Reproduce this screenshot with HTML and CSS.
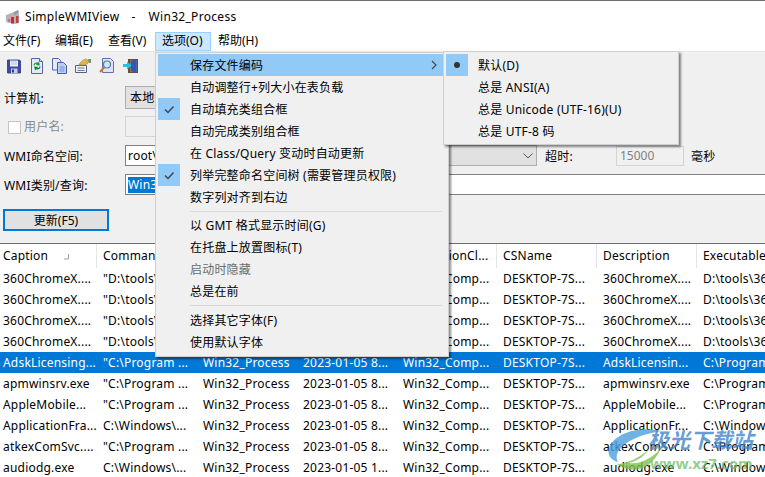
FILE: index.html
```html
<!DOCTYPE html>
<html lang="zh-CN">
<head>
<meta charset="utf-8">
<title>SimpleWMIView - Win32_Process</title>
<link rel="stylesheet" href="styles.css">
</head>
<body>
<div class="app">
  <header class="titlebar">
    <svg class="app-icon" width="15" height="16" viewBox="0 0 15 16"><path d="M1 6l8-3 5 2v9l-4 1-9-2z" fill="#b4b4bc"/><path d="M2 7l7-3v10l-7-1z" fill="#d4a8ac"/><path d="M9 3l4-2 1 3-5 2z" fill="#8f98a8"/><path d="M6 8h3v6.500H6z" fill="#c62c30"/><path d="M11 7h2.500v7H11z" fill="#c83a3c"/><path d="M3 10h2v3H3z" fill="#8c8c94"/></svg>
    <span class="title-app">SimpleWMIView</span><span class="title-dash">-</span><span class="title-doc">Win32_Process</span>
  </header>
  <nav class="menubar">
    <span class="menu-top first">文件(F)</span>
    <span class="menu-top">编辑(E)</span>
    <span class="menu-top">查看(V)</span>
    <span class="menu-top active">选项(O)</span>
    <span class="menu-top">帮助(H)</span>
  </nav>
  <div class="toolbar">
    <svg class="tool" width="16" height="16" viewBox="0 0 16 16"><path d="M1.500 2h12l1 1v12h-13z" fill="#3a4aa6" stroke="#2a3280" stroke-width=".8"/><path d="M4 2.500h8v6H4z" fill="#eceef6"/><path d="M5 4h6M5 6h6" stroke="#b0b4d0" stroke-width=".8"/><path d="M5 10.500h6.500V15H5z" fill="#c8cce0"/><path d="M6 11.500h2V14.500H6z" fill="#34407c"/></svg>
    <svg class="tool" width="16" height="16" viewBox="0 0 16 16"><path d="M2.500.5h8l3 3v12h-11z" fill="#e6eaf8" stroke="#5464b0"/><path d="M10.500.5v3h3" fill="#c8d0ec" stroke="#5464b0"/><path d="M4.500 7.500c0-2.500 2.500-3.500 4.500-2.700l1-1.300.8 4-4-.4 1-1.200c-1.200-.4-2 .3-2.100 1.600z" fill="#149a34"/><path d="M11.500 8.500c0 2.500-2.500 3.500-4.500 2.700l-1 1.300-.8-4 4 .4-1 1.200c1.200.4 2-.3 2.100-1.600z" fill="#0c8028"/></svg>
    <svg class="tool" width="16" height="16" viewBox="0 0 16 16"><path d="M.5.500h6l2.500 2.500v9H.5z" fill="#e6eaf8" stroke="#5868b0"/><path d="M5.500 4.500h6l3 3v8h-9z" fill="#bcd0f4" stroke="#4c5cac"/><path d="M7.500 9h5M7.500 11h5M7.500 13h5" stroke="#6c84cc" stroke-width=".8"/></svg>
    <svg class="tool" width="17" height="16" viewBox="0 0 17 16"><path d="M.5 7.500h11v7H.5z" fill="#f0f2f8" stroke="#56607c"/><path d="M2.500 10h7M2.500 12.500h7" stroke="#707890"/><path d="M4 7c1-3 4-5 7-6l3 2c-1 3-3 4-6 4z" fill="#dcb454" stroke="#a08030" stroke-width=".6"/><path d="M13 1h3v4h-2z" fill="#6a9a70"/></svg>
    <svg class="tool" width="16" height="16" viewBox="0 0 16 16"><path d="M3.500.5h8l3 3v11h-11z" fill="#dce4f6" stroke="#6070b4"/><circle cx="8" cy="6.500" r="3.500" fill="#cfe6f8" stroke="#5878b4" stroke-width="1.200"/><path d="M5.500 9L1 14" stroke="#c87830" stroke-width="2"/></svg>
    <svg class="tool" width="17" height="16" viewBox="0 0 17 16"><path d="M6 1h10v14H6z" fill="#6e4c36"/><path d="M8 2h7v12H8z" fill="#8f7058"/><path d="M9 3l5.500-2v14L9 13z" fill="#2c58c0"/><path d="M1 6h4V3.500L9.500 7.500 5 11.500V9H1z" fill="#18c8e8"/></svg>
  </div>
  <section class="form">
    <div class="form-row row-computer">
      <label class="form-label">计算机:</label>
      <div class="combo wide">本地计算机</div>
    </div>
    <div class="form-row row-user">
      <span class="check-label"><span class="checkbox"></span>用户名:</span>
      <div class="input disabled short"></div>
    </div>
    <div class="form-row row-ns">
      <label class="form-label">WMI命名空间:</label>
      <div class="input ns">root\CIMV2</div>
      <div class="combo lang"><svg class="chev" width="10" height="6" viewBox="0 0 10 6"><path d="M.5.500L5 5 9.500.5" fill="none" stroke="#555"/></svg></div>
      <label class="timeout-label">超时:</label>
      <div class="input timeout">15000</div>
      <span class="unit">毫秒</span>
    </div>
    <div class="form-row row-query">
      <label class="form-label">WMI类别/查询:</label>
      <div class="input query"><span class="selected-text">Win32_Process</span></div>
    </div>
    <button class="update">更新(F5)</button>
  </section>
  <section class="list">
    <div class="row head">
      <div class="cell">Caption<svg class="sort" width="7" height="7" viewBox="0 0 7 7"><path d="M5.500 1v5H1" fill="none" stroke="#a0a0a0"/></svg></div>
      <div class="cell">CommandLine</div><div class="cell">CreationCla...</div><div class="cell">CreationDate</div><div class="cell">CSCreationCl...</div><div class="cell">CSName</div><div class="cell">Description</div><div class="cell">ExecutablePath</div>
    </div>
    <div class="row"><div class="cell">360ChromeX....</div><div class="cell">"D:\tools\36...</div><div class="cell">Win32_Process</div><div class="cell">2023-01-05 8...</div><div class="cell">Win32_Comp...</div><div class="cell">DESKTOP-7S...</div><div class="cell">360ChromeX....</div><div class="cell">D:\tools\360Chrome</div></div>
    <div class="row"><div class="cell">360ChromeX....</div><div class="cell">"D:\tools\36...</div><div class="cell">Win32_Process</div><div class="cell">2023-01-05 8...</div><div class="cell">Win32_Comp...</div><div class="cell">DESKTOP-7S...</div><div class="cell">360ChromeX....</div><div class="cell">D:\tools\360Chrome</div></div>
    <div class="row"><div class="cell">360ChromeX....</div><div class="cell">"D:\tools\36...</div><div class="cell">Win32_Process</div><div class="cell">2023-01-05 8...</div><div class="cell">Win32_Comp...</div><div class="cell">DESKTOP-7S...</div><div class="cell">360ChromeX....</div><div class="cell">D:\tools\360Chrome</div></div>
    <div class="row"><div class="cell">360ChromeX....</div><div class="cell">"D:\tools\36...</div><div class="cell">Win32_Process</div><div class="cell">2023-01-05 8...</div><div class="cell">Win32_Comp...</div><div class="cell">DESKTOP-7S...</div><div class="cell">360ChromeX....</div><div class="cell">D:\tools\360Chrome</div></div>
    <div class="row selected"><div class="cell">AdskLicensing...</div><div class="cell">"C:\Program ...</div><div class="cell">Win32_Process</div><div class="cell">2023-01-05 8...</div><div class="cell">Win32_Comp...</div><div class="cell">DESKTOP-7S...</div><div class="cell">AdskLicensin...</div><div class="cell">C:\Program Files</div></div>
    <div class="row"><div class="cell">apmwinsrv.exe</div><div class="cell">"C:\Program ...</div><div class="cell">Win32_Process</div><div class="cell">2023-01-05 8...</div><div class="cell">Win32_Comp...</div><div class="cell">DESKTOP-7S...</div><div class="cell">apmwinsrv.exe</div><div class="cell">C:\Program Files</div></div>
    <div class="row"><div class="cell">AppleMobile...</div><div class="cell">"C:\Program ...</div><div class="cell">Win32_Process</div><div class="cell">2023-01-05 8...</div><div class="cell">Win32_Comp...</div><div class="cell">DESKTOP-7S...</div><div class="cell">AppleMobile...</div><div class="cell">C:\Program Files</div></div>
    <div class="row"><div class="cell">ApplicationFra...</div><div class="cell">C:\Windows\...</div><div class="cell">Win32_Process</div><div class="cell">2023-01-05 8...</div><div class="cell">Win32_Comp...</div><div class="cell">DESKTOP-7S...</div><div class="cell">ApplicationFr...</div><div class="cell">C:\Windows\System</div></div>
    <div class="row"><div class="cell">atkexComSvc....</div><div class="cell">"C:\Program ...</div><div class="cell">Win32_Process</div><div class="cell">2023-01-05 8...</div><div class="cell">Win32_Comp...</div><div class="cell">DESKTOP-7S...</div><div class="cell">atkexComSvc...</div><div class="cell">C:\Program Files</div></div>
    <div class="row"><div class="cell">audiodg.exe</div><div class="cell">C:\Windows\...</div><div class="cell">Win32_Process</div><div class="cell">2023-01-05 1...</div><div class="cell">Win32_Comp...</div><div class="cell">DESKTOP-7S...</div><div class="cell">audiodg.exe</div><div class="cell">C:\Windows\System</div></div>
  </section>
</div>

<div class="popup main-menu">
  <div class="item open">保存文件编码<svg class="arrow" width="6" height="10" viewBox="0 0 6 10"><path d="M1 1l4 4-4 4" fill="none" stroke="#444" stroke-width="1.100"/></svg></div>
  <div class="item">自动调整行+列大小在表负载</div>
  <div class="item checked"><svg class="mark" width="22" height="22" viewBox="0 0 22 22"><path d="M7 11.500l3 3 5.500-6" fill="none" stroke="#3c4a58" stroke-width="1.500"/></svg>自动填充类组合框</div>
  <div class="item">自动完成类别组合框</div>
  <div class="item">在 Class/Query 变动时自动更新</div>
  <div class="item checked"><svg class="mark" width="22" height="22" viewBox="0 0 22 22"><path d="M7 11.500l3 3 5.500-6" fill="none" stroke="#3c4a58" stroke-width="1.500"/></svg>列举完整命名空间树 (需要管理员权限)</div>
  <div class="item">数字列对齐到右边</div>
  <div class="sep"></div>
  <div class="item">以 GMT 格式显示时间(G)</div>
  <div class="item">在托盘上放置图标(T)</div>
  <div class="item muted">启动时隐藏</div>
  <div class="item">总是在前</div>
  <div class="sep"></div>
  <div class="item">选择其它字体(F)</div>
  <div class="item">使用默认字体</div>
</div>

<div class="popup sub-menu">
  <div class="item checked"><svg class="mark" width="22" height="22" viewBox="0 0 22 22"><circle cx="11" cy="11" r="3" fill="#333"/></svg>默认(D)</div>
  <div class="item">总是 ANSI(A)</div>
  <div class="item">总是 Unicode (UTF-16)(U)</div>
  <div class="item">总是 UTF-8 码</div>
</div>

<div class="watermark">
  <svg class="wm-logo" width="58" height="46" viewBox="0 0 58 46"><path d="M54 3C34-2 8 4 2 20c-2 7 2 12 9 14C6 26 14 10 54 3z" fill="#4aa0dc" opacity=".8"/><path d="M10 36c14 10 34 8 44-16-8 10-22 17-32 15 8-2 16-7 20-14-8 8-22 15-32 15z" fill="#7cc04c" opacity=".8"/></svg>
  <div class="wm-name">极光下载站</div>
  <div class="wm-url">www.xz7.com</div>
</div>
</body>
</html>
```
FILE: styles.css
```css
* { box-sizing: border-box; }
html, body { margin: 0; padding: 0; }
body {
  width: 765px;
  height: 477px;
  overflow: hidden;
  position: relative;
  background: #f0f0f0;
  color: #000;
  font: 12px/16px "Noto Sans", "Noto Sans CJK SC", sans-serif;
  letter-spacing: .2px;
}
.app { display: flex; flex-direction: column; height: 477px; }

.titlebar {
  height: 32px;
  flex: none;
  display: flex;
  align-items: center;
  background: #fff;
  border-top: 1px solid #6e6e6e;
  padding: 1px 0 0 5px;
  letter-spacing: .3px;
}
.app-icon { margin-right: 5px; }
.title-dash { margin-left: 12px; }
.title-doc { margin-left: 13px; }

.menubar {
  height: 19px;
  flex: none;
  display: grid;
  grid-template-columns: 48px 53px 54px 56px 54px;
  background: #fff;
  letter-spacing: 0;
}
.menu-top { padding: 1px 0 0 7px; line-height: 16px; }
.menu-top.first { padding-left: 3px; }
.menu-top.active { background: #cce8ff; border: 1px solid #99d1ff; padding: 0 0 0 6px; }

.toolbar {
  height: 28px;
  flex: none;
  display: flex;
  align-items: center;
  gap: 7px;
  padding: 0 0 0 6px;
  border-top: 1px solid #e6e6e6;
}

.form { height: 164px; flex: none; padding-top: 7px; }
.form-row { display: flex; align-items: center; }
.row-computer { height: 23px; }
.row-user { height: 21px; margin-top: 7px; }
.row-ns { height: 21px; margin-top: 8px; }
.row-query { height: 21px; margin-top: 8px; }
.form-label { width: 125px; padding: 2px 0 0 4px; flex: none; }
.row-query .form-label { padding-top: 3px; }
.check-label { width: 125px; flex: none; padding: 1px 0 0 8px; display: flex; align-items: center; color: #8a8a8a; }
.checkbox { width: 13px; height: 13px; border: 1px solid #c4c4c4; background: #fff; margin-right: 3px; }
.combo { background: #e1e1e1; border: 1px solid #adadad; height: 100%; padding-left: 4px; display: flex; align-items: center; }
.combo.wide { width: 315px; }
.input { background: #fff; border: 1px solid #a0a0a0; height: 100%; padding-left: 2px; display: flex; align-items: center; overflow: hidden; white-space: nowrap; }
.input.disabled { background: #f0f0f0; border-color: #d4d4d4; }
.input.short { width: 315px; }
.input.ns { width: 170px; border-color: #808080; }
.combo.lang { width: 242px; justify-content: flex-end; padding-right: 3px; }
.timeout-label { margin-left: 8px; width: 71px; flex: none; padding-top: 2px; }
.input.timeout { width: 68px; height: 20px; background: #f0f0f0; border-color: #d4d4d4; color: #808080; padding-left: 3px; letter-spacing: 0; }
.unit { margin-left: 7px; padding-top: 2px; }
.input.query { flex: 1; border-color: #808080; border-right: 0; height: 21px; }
.selected-text { background: #0078d7; color: #fff; }
.update {
  display: block;
  margin: 14px 0 0 3px;
  width: 106px;
  height: 22px;
  background: #e1e1e1;
  border: 2px solid #0078d7;
  padding: 2px 0 0;
  font: inherit;
  letter-spacing: 0;
  color: #000;
}

.list { flex: 1; background: #fff; border-top: 1px solid #6e6e6e; overflow: hidden; }
.row { display: grid; grid-template-columns: 97px repeat(7, 100px); height: 21px; align-items: center; }
.cell { padding-left: 3px; white-space: nowrap; overflow: hidden; }
.row .cell:not(:first-child) { padding-left: 6px; }
.row.head { height: 24px; }
.head .cell { height: 24px; line-height: 23px; border-right: 1px solid #e5e5e5; }
.sort { margin-left: 15px; }
.row.selected { background: #0078d7; color: #fff; }

.popup {
  position: absolute;
  background: #f0f0f0;
  border: 1px solid #cfcfcf;
  box-shadow: 2px 2px 2px rgba(0, 0, 0, .45);
}
.main-menu { left: 155px; top: 52px; width: 294px; height: 305px; padding: 1px 2px; }
.sub-menu { left: 443px; top: 51px; width: 236px; height: 94px; padding: 2px; }
.item { position: relative; height: 22px; line-height: 22px; padding: 1px 0 0 32px; white-space: nowrap; }
.item.open { background: #91c9f7; width: 286px; }
.item.muted { color: #6d6d6d; }
.mark { position: absolute; left: 0; top: 0; background: #91c9f7; }
.arrow { position: absolute; right: 7px; top: 6px; }
.sep { height: 7px; position: relative; }
.sep::after { content: ""; position: absolute; left: 32px; right: 4px; top: 3px; height: 1px; background: #d7d7d7; }
.item:nth-child(7) + .sep { height: 6px; }

.watermark { position: absolute; left: 605px; top: 428px; width: 160px; height: 49px; pointer-events: none; }
.wm-logo { position: absolute; left: 2px; top: 0; }
.wm-name { position: absolute; left: 43px; top: -1px; font: italic 700 21px/24px "Noto Sans CJK SC", sans-serif; letter-spacing: 0; color: rgba(58, 130, 200, .8); white-space: nowrap; }
.wm-url { position: absolute; left: 45px; top: 26px; font: 700 15px/18px "Noto Sans", sans-serif; letter-spacing: 0; color: rgba(110, 190, 110, .75); white-space: nowrap; }
```
